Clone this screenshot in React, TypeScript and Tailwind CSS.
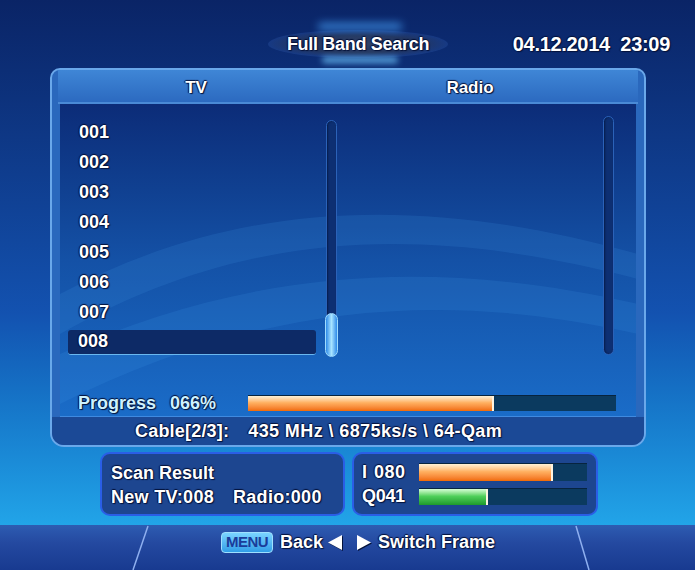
import React from "react";

const shadow = "[text-shadow:1px_1px_1px_#04123a,-1px_0_1px_#04123a,0_-1px_1px_#04123a]";

const tvList = ["001", "002", "003", "004", "005", "006", "007", "008"];

function ScrollBar({ thumb }: { thumb?: boolean }) {
  return (
    <div className="relative w-[11px] h-full rounded-full bg-[#0d2f72] border border-[#2b62b8] shadow-[inset_1px_0_2px_#061c4a]">
      {thumb && (
        <div className="absolute bottom-[-2px] left-[-2px] w-[13px] h-[44px] rounded-full border border-[#9fdcff] bg-gradient-to-r from-[#2a8ae8] via-[#a8e4ff] to-[#2a8ae8]" />
      )}
    </div>
  );
}

function Bar({ pct, kind, h }: { pct: number; kind: "orange" | "green"; h: string }) {
  const fill =
    kind === "orange"
      ? "bg-gradient-to-b from-[#fff1d6] via-[#ffb060] via-45% to-[#f06a00]"
      : "bg-gradient-to-b from-[#d6ffd6] via-[#4fd05a] via-45% to-[#1c9a2c]";
  return (
    <div className={`flex-1 ${h} bg-[#0b3a5f] border-t border-[#07243f]`}>
      <div className={`h-full ${fill} border-r-2 border-[#fff4e0]`} style={{ width: `${pct}%` }} />
    </div>
  );
}

function Arrow({ dir }: { dir: "left" | "right" }) {
  return (
    <svg width="14" height="15" viewBox="0 0 14 15" className="drop-shadow-[1px_1px_0_#04123a]">
      {dir === "left" ? <polygon points="14,0 14,15 0,7.5" fill="#fff" /> : <polygon points="0,0 0,15 14,7.5" fill="#fff" />}
    </svg>
  );
}

export default function App() {
  return (
    <div
      className={`w-[695px] h-[570px] overflow-hidden flex flex-col text-white font-bold bg-gradient-to-b from-[#0a2466] via-[#1352b0] via-55% to-[#28b6f4] ${shadow}`}
      style={{ fontFamily: '"Liberation Sans", Arial, sans-serif' }}
    >
      {/* top bar */}
      <div className="relative h-[68px] flex items-start pt-[33px] shrink-0">
        <div className="absolute left-[268px] top-[30px] w-[180px] h-[28px] rounded-[50%] bg-[radial-gradient(ellipse_at_center,#334468_0%,#22355e_45%,rgba(40,80,160,0.4)_70%,transparent_100%)]" />
        <div className="absolute left-[318px] top-[23px] w-[84px] h-[7px] rounded-full bg-[#4aa8ff] opacity-70 blur-[4px]" />
        <div className="absolute left-[322px] top-[57px] w-[76px] h-[6px] rounded-full bg-[#6fc8ff] opacity-80 blur-[3px]" />
        <div className="relative ml-[263px] w-[190px] text-center text-[18px] leading-[22px] tracking-[-0.3px]">
          Full Band Search
        </div>
        <div className="relative ml-auto mr-[25px] text-[20px] leading-[22px] tracking-[-0.3px]">
          04.12.2014&nbsp;&nbsp;23:09
        </div>
      </div>

      {/* main panel */}
      <div className="ml-[50px] w-[596px] h-[379px] shrink-0 rounded-t-[10px] rounded-b-[14px] border-2 border-[#6aa8ea] bg-[#2a68bd] flex flex-col overflow-hidden">
        <div className="h-[34px] shrink-0 flex items-center pt-[4px] text-[17px] bg-gradient-to-b from-[#3f86d6] to-[#2c6ac0] border-b-2 border-[#4a8ad6] mx-[6px]">
          <div className="w-[276px] text-center">TV</div>
          <div className="w-[272px] text-center">Radio</div>
        </div>

        <div className="relative mx-[8px] h-[312px] shrink-0 bg-gradient-to-b from-[#0c2c78] via-[#1451a6] to-[#1a6cc8] overflow-hidden">
          <svg className="absolute inset-0" width="578" height="312" viewBox="0 0 578 312">
            <path d="M0 190 C 150 110, 330 80, 578 150 L 578 175 C 330 110, 160 140, 0 230 Z" fill="#3d8ee0" opacity="0.18" />
            <path d="M0 250 C 180 170, 360 150, 578 200 L 578 230 C 360 180, 180 210, 0 300 Z" fill="#4aa0ee" opacity="0.14" />
          </svg>

          <div className="relative flex items-start h-[280px] pt-[12px]">
            <div className="w-[258px] pl-[8px] pt-[1px] flex flex-col">
              {tvList.map((n) =>
                n === "008" ? (
                  <div key={n} className="h-[30px] flex items-center">
                    <div className="w-[248px] h-[25px] rounded-[3px] bg-[#0d2a66] border-b border-[#6ab8f0] flex items-center pl-[10px] text-[18px]">
                      {n}
                    </div>
                  </div>
                ) : (
                  <div key={n} className="h-[30px] flex items-center pl-[11px] text-[18px]">
                    {n}
                  </div>
                ),
              )}
            </div>
            <div className="ml-[8px] pt-[4px] h-[240px]">
              <ScrollBar thumb />
            </div>
            <div className="ml-auto mr-[22px] h-[239px]">
              <ScrollBar />
            </div>
          </div>

          <div className="relative flex items-center h-[32px] pt-[6px] pl-[18px] pr-[20px] text-[18px] text-[#cdf2ff]">
            <span className="w-[92px]">Progress</span>
            <span className="w-[78px]">066%</span>
            <Bar pct={66.8} kind="orange" h="h-[16px]" />
          </div>
        </div>

        <div className="h-[3px] mx-[8px] bg-[#3f8ae0]" />
        <div className="flex-1 flex items-center bg-[#1b4996] text-[18px] pl-[83px] pt-[1px]">
          <span className="tracking-[0.2px]">Cable[2/3]:</span>
          <span className="ml-[19px] tracking-[0.4px]">435 MHz \ 6875ks/s \ 64-Qam</span>
        </div>
      </div>

      {/* info boxes */}
      <div className="flex gap-[7px] ml-[100px] mt-[5px] shrink-0">
        <div className="w-[245px] h-[64px] rounded-[10px] border-2 border-[#2a5ee6] bg-[#1d4690] pl-[9px] pt-[7px] text-[18px] leading-[24px]">
          <div>Scan Result</div>
          <div className="flex tracking-[0.3px]">
            <span className="w-[122px]">New TV:008</span>
            <span>Radio:000</span>
          </div>
        </div>
        <div className="w-[246px] h-[64px] rounded-[10px] border-2 border-[#2a5ee6] bg-[#1d4690] pl-[8px] pr-[9px] pt-[9px] text-[18px] leading-[18px] flex flex-col gap-[6px]">
          <div className="flex items-center">
            <span className="w-[57px] flex">
              <span className="w-[12px]">I</span>
              <span className="tracking-[0.5px]">080</span>
            </span>
            <Bar pct={80} kind="orange" h="h-[18px]" />
          </div>
          <div className="flex items-center">
            <span className="w-[57px] tracking-[-0.3px]">Q041</span>
            <Bar pct={41} kind="green" h="h-[17px]" />
          </div>
        </div>
      </div>

      {/* footer */}
      <div className="relative mt-[9px] flex-1 bg-gradient-to-b from-[#2e5cb2] via-[#2449a0] via-40% to-[#183a90]">
        <svg className="absolute inset-0" width="695" height="45" viewBox="0 0 695 45">
          <line x1="148" y1="1" x2="133" y2="45" stroke="#8fb0f0" strokeWidth="1.5" />
          <line x1="576" y1="1" x2="589" y2="45" stroke="#8fb0f0" strokeWidth="1.5" />
        </svg>
        <div className="relative flex items-center pl-[221px] pt-[4px] text-[18px]">
          <div className="w-[52px] h-[21px] rounded-[4px] border border-[#9ee0ff] bg-gradient-to-b from-[#7ad4ff] to-[#2f9ee8] text-[#1a3c9a] text-[15px] flex items-center justify-center tracking-[-0.5px] [text-shadow:none]">
            MENU
          </div>
          <span className="ml-[7px]">Back</span>
          <span className="ml-[5px] flex">
            <Arrow dir="left" />
          </span>
          <span className="ml-[15px] flex">
            <Arrow dir="right" />
          </span>
          <span className="ml-[7px]">Switch Frame</span>
        </div>
      </div>
    </div>
  );
}
